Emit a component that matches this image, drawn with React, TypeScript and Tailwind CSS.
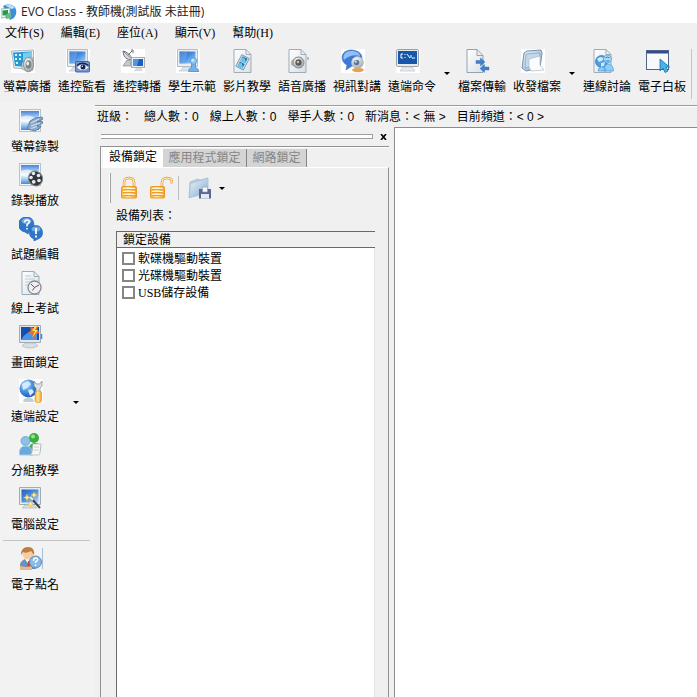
import React from "react";

type IconProps = { children: React.ReactNode };

function Icon({ children }: IconProps) {
  return (
    <svg width="24" height="24" viewBox="0 0 24 24" className="block shrink-0" aria-hidden="true">
      {children}
    </svg>
  );
}

function Gradients() {
  return (
    <svg width="0" height="0" className="absolute" aria-hidden="true">
      <defs>
        <linearGradient id="screen" x1="0" y1="0" x2="1" y2="1">
          <stop offset="0" stopColor="#1f5cc0" />
          <stop offset="0.5" stopColor="#4b92e2" />
          <stop offset="1" stopColor="#b4dafa" />
        </linearGradient>
        <linearGradient id="sky" x1="0" y1="0" x2="0" y2="1">
          <stop offset="0" stopColor="#4585d8" />
          <stop offset="0.5" stopColor="#e4f2fd" />
          <stop offset="0.7" stopColor="#b3d6f6" />
          <stop offset="1" stopColor="#3f8ade" />
        </linearGradient>
        <linearGradient id="page" x1="0" y1="0" x2="1" y2="1">
          <stop offset="0" stopColor="#ffffff" />
          <stop offset="1" stopColor="#d9e0e7" />
        </linearGradient>
        <linearGradient id="folder" x1="0" y1="0" x2="1" y2="1">
          <stop offset="0" stopColor="#e8f3fb" />
          <stop offset="1" stopColor="#86a9cf" />
        </linearGradient>
        <linearGradient id="gold" x1="0" y1="0" x2="1" y2="0">
          <stop offset="0" stopColor="#fbb02f" />
          <stop offset="0.45" stopColor="#ffe69a" />
          <stop offset="1" stopColor="#f79b1e" />
        </linearGradient>
        <radialGradient id="ball" cx="0.35" cy="0.3" r="0.8">
          <stop offset="0" stopColor="#d7edff" />
          <stop offset="0.45" stopColor="#4793e2" />
          <stop offset="1" stopColor="#1450b4" />
        </radialGradient>
        <radialGradient id="metal" cx="0.35" cy="0.3" r="0.8">
          <stop offset="0" stopColor="#ffffff" />
          <stop offset="1" stopColor="#9ba1a7" />
        </radialGradient>
      </defs>
    </svg>
  );
}

const Tile = () => <rect width="24" height="24" fill="#fff" />;

const Monitor = () => (
  <>
    <path d="M1.500 .5h20v17h-20z" fill="#eceff2" stroke="#b4bcc5" />
    <path d="M3.500 2.500h16v12h-16z" fill="url(#screen)" />
    <path d="M3.500 2.500h8l-3 12h-5z" fill="#7fb2ee" opacity=".45" />
    <path d="M7 18h9l1 2 3 2H3l3-2z" fill="#dfe3e7" stroke="#b7bec6" strokeWidth=".6" />
  </>
);

const Paper = () => (
  <path d="M3 .5h12l5 5v18H3zM15 .5v5h5" fill="url(#page)" stroke="#9fabb7" />
);

const Photo = () => (
  <>
    <rect x=".5" y=".5" width="21" height="22" fill="#f2f6fa" stroke="#b9c3cd" />
    <rect x="2" y="2" width="18" height="19" fill="url(#sky)" />
    <path d="M2 8q6-3 12 0t6-1v5q-9 3-18 1z" fill="#fff" opacity=".6" />
  </>
);

function BroadcastIcon() {
  return (
    <Icon>
      <Tile />
      <path d="M.5 2l22-1v11L19 20 3 19z" fill="#e9eef2" stroke="#a6b4c0" />
      <path d="M2 3.500l19-1v11L16 18 4 17z" fill="#2799d3" />
      <path d="M4 5h2v2H4zm4 0h2v2H8zM4 9h2v2H4zm4 0h2v2H8zm-3 4h2v2H5z" fill="#d8f3ff" />
      <path d="M12 4l9-1v8l-9 1z" fill="#7accee" />
      <path d="M11 14l8-6 3 1v12l-5 2-6-3z" fill="#d8dcd8" stroke="#8a938f" strokeWidth=".7" />
      <ellipse cx="17.500" cy="15.500" rx="5" ry="7" fill="url(#metal)" stroke="#889094" />
      <ellipse cx="17.500" cy="15.500" rx="3" ry="4.200" fill="#7b8689" />
      <ellipse cx="16.700" cy="14.600" rx="1.400" ry="2" fill="#e9eeef" />
    </Icon>
  );
}

function WatchIcon() {
  return (
    <Icon>
      <Tile />
      <Monitor />
      <rect x="9.500" y="12.500" width="14" height="10.500" rx="1" fill="#7994cb" stroke="#4462a6" />
      <path d="M11 18.500q5-6 11.500 0q-6 5-11.500 0" fill="#f5f8fc" />
      <circle cx="17" cy="18" r="2.500" fill="#12244d" />
      <circle cx="16.300" cy="17.300" r=".7" fill="#fff" />
      <path d="M11 16.500q5-4.500 11.500 0" fill="none" stroke="#16264d" strokeWidth="1.300" />
    </Icon>
  );
}

function RelayIcon() {
  return (
    <Icon>
      <Tile />
      <path d="M2 2q0 9 10 9z" fill="#d8dcdf" stroke="#71787f" />
      <path d="M2 2q6 1 10 9M7 6l4-4M10 1h2v3" fill="none" stroke="#666d74" />
      <path d="M6 11l-4 6h8l-1-6z" fill="#c4c9ce" stroke="#858c93" strokeWidth=".7" />
      <rect x="10.500" y="8.500" width="13" height="10" fill="#edf0f3" stroke="#a5afb9" />
      <rect x="12" y="10" width="10" height="7" fill="#1c5fc0" />
      <path d="M12 10h6l-2 7h-4z" fill="#5294e0" />
      <path d="M15 19h5l2 3h-9z" fill="#d5dade" />
    </Icon>
  );
}

function StudentIcon() {
  return (
    <Icon>
      <Tile />
      <Monitor />
      <path d="M12.500 22.500q0-3 3-4v-4h4v4q3 1 3.500 4z" fill="#73b2e8" stroke="#3d86c8" strokeWidth=".7" />
      <circle cx="17.500" cy="12" r="3.300" fill="#8fc6f2" stroke="#4a90cf" strokeWidth=".7" />
      <circle cx="16.700" cy="11.200" r="1.200" fill="#dcefff" />
    </Icon>
  );
}

function MovieIcon() {
  return (
    <Icon>
      <Paper />
      <g transform="rotate(28 12 13)">
        <rect x="7.500" y="7" width="8.500" height="13" fill="#d7e3ec" stroke="#70828f" strokeWidth=".7" />
        <path d="M9 8h5.500v5H9zm0 6h5.500v5H9z" fill="#1c78b8" />
        <path d="M9 10l2-1.500 3.500 3V13H9zm0 6l2-1.500 3.500 3V19H9z" fill="#6fc4ee" />
      </g>
    </Icon>
  );
}

function AudioIcon() {
  return (
    <Icon>
      <Paper />
      <path d="M5 12l5-4h6v11h-5l-6-3z" fill="#b9b7af" />
      <circle cx="12.500" cy="13.500" r="5.500" fill="url(#metal)" stroke="#868686" />
      <circle cx="12.500" cy="13.500" r="3.200" fill="#555a63" />
      <circle cx="12" cy="13" r="1.300" fill="#d7bd7d" />
      <path d="M22 8v3" stroke="#888" />
    </Icon>
  );
}

function VideoChatIcon() {
  return (
    <Icon>
      <Tile />
      <path d="M10 1c6 0 11 3 11 8s-5 8-10 8l-6 4 1-5C-2 12 0 1 10 1z" fill="#3c7ad6" stroke="#3a74c8" strokeWidth=".6" />
      <path d="M10 2c5 0 9 2 9 5-5-2-12 0-16 4C1 7 4 2 10 2z" fill="#92c0f4" />
      <ellipse cx="17" cy="21" rx="6" ry="2.200" fill="#e9a247" />
      <circle cx="16.500" cy="13.500" r="6" fill="url(#metal)" stroke="#b5bcc6" strokeWidth=".6" />
      <circle cx="15.500" cy="13.500" r="2.800" fill="#5b7698" />
      <circle cx="14.700" cy="12.600" r="1.200" fill="#c9e3fb" />
    </Icon>
  );
}

function CommandIcon() {
  return (
    <Icon>
      <Tile />
      <rect x=".5" y=".5" width="22" height="17" rx="1" fill="#e8ebee" stroke="#97a1ab" />
      <rect x="2" y="2" width="19" height="13" fill="#1557a8" />
      <path d="M7 5H5v4h2M9 5v1M9 8v1M11 5l3 4M15 6v3M16 9h3" fill="none" stroke="#fff" />
      <path d="M7 18h9l3 4H4z" fill="#e9ecef" stroke="#bbc2c9" strokeWidth=".7" />
    </Icon>
  );
}

function TransferIcon() {
  return (
    <Icon>
      <path d="M1 .5h10l6 6v17H1zM11 .5v6h6" fill="url(#page)" stroke="#94a3b0" />
      <path d="M10 11.500h4.500V9l4.500 4-4.500 4v-2.500H10zM23 18h-4.500v-2.500l-4.500 4 4.500 4V21H23z" fill="#3f7fce" stroke="#2d68b4" strokeWidth=".4" />
    </Icon>
  );
}

function CollectIcon() {
  return (
    <Icon>
      <Tile />
      <path d="M3 4l3-2 14-1 1 3-2 15-14 3-4-3z" fill="url(#folder)" stroke="#7892ad" />
      <path d="M5 5l14-1-2 13-13 2z" fill="#c3d8ea" stroke="#7f9bb8" strokeWidth=".6" />
      <path d="M8 10l11-3v9l4 5-12 1q-4-1-3-12z" fill="#fafcfd" stroke="#a4afbb" strokeWidth=".6" />
    </Icon>
  );
}

function DiscussIcon() {
  return (
    <Icon>
      <Paper />
      <circle cx="10.500" cy="12.500" r="6" fill="#4e9bdd" stroke="#2b72b8" strokeWidth=".7" />
      <path d="M6 10l3-2 4 1-2 3-3 1zm4 4l4-1-1 4-3 1z" fill="#c5ecff" />
      <circle cx="16.500" cy="10" r="4" fill="#a8dcfa" stroke="#4c9bd4" strokeWidth=".7" />
      <path d="M14.500 9q2-2 4 0M14.500 12h4" stroke="#2f82c3" fill="none" />
      <path d="M7 22q0-4 4-4t4 4zM13 22q0-7 4.500-7t5 7z" fill="#8fcdf3" stroke="#4b9ed8" strokeWidth=".7" />
    </Icon>
  );
}

function WhiteboardIcon() {
  return (
    <Icon>
      <rect x=".5" y="1.500" width="22" height="19" fill="#f7f9fc" stroke="#52648d" />
      <path d="M1 2h21v2.500H1z" fill="#304c8e" />
      <path d="M14 10v12l3-3 2 4.500 3-1.500-2-4h3.500z" fill="#45b4e7" stroke="#1e6f9f" strokeWidth=".8" />
    </Icon>
  );
}

function RecordIcon() {
  return (
    <Icon>
      <Photo />
      <path d="M8 20l3-8 5-3 7-1 1 2-6 3 5-1 1 2-6 3 4 0-1 2-5 3z" fill="#8ba9cb" stroke="#4f7199" strokeWidth=".8" />
      <path d="M12 14l8-4M12 17l9-3M12 19.500l6-2" stroke="#e0ecf8" strokeWidth=".9" />
    </Icon>
  );
}

function PlaybackIcon() {
  return (
    <Icon>
      <Photo />
      <ellipse cx="16.500" cy="15.500" rx="7" ry="7.500" transform="rotate(-30 16.500 15.500)" fill="#33373b" stroke="#858a8e" />
      <g fill="#e6eaec">
        <circle cx="14.500" cy="10.500" r="1.800" />
        <circle cx="12" cy="14.500" r="1.800" />
        <circle cx="19.500" cy="12.500" r="1.800" />
        <circle cx="14.700" cy="18.800" r="1.900" />
        <circle cx="20" cy="17.500" r="1.800" />
      </g>
    </Icon>
  );
}

function QuizIcon() {
  return (
    <Icon>
      <path d="M8 0a7.500 7.500 0 0 1 2 14.500L9 17l-3-2A7.500 7.500 0 0 1 8 0z" fill="#2f76cb" stroke="#2763b3" strokeWidth=".7" />
      <ellipse cx="7.500" cy="4" rx="5" ry="3" fill="#8fc1ef" opacity=".7" />
      <path d="M5.500 5.500q.5-3 3-2.500c3 .5 2 3.500-.5 4.500v2M8 11v1.500" fill="none" stroke="#fff" strokeWidth="1.500" />
      <path d="M17 8.500a7 7 0 0 1 2 13.500l-4 2v-2A7 7 0 0 1 17 8.500z" fill="#2f76cb" stroke="#2763b3" strokeWidth=".7" />
      <ellipse cx="17" cy="12" rx="4.500" ry="2.500" fill="#8fc1ef" opacity=".7" />
      <path d="M17 11v6M17 18.500v2" stroke="#fff" strokeWidth="1.800" />
    </Icon>
  );
}

function ExamIcon() {
  return (
    <Icon>
      <Paper />
      <path d="M6 5h6M6 8h10M6 11h6M6 14h4" stroke="#c3cbd2" />
      <circle cx="15.500" cy="16.500" r="6.500" fill="#edf0f2" stroke="#858c94" strokeWidth="1.300" />
      <path d="M12 13l3.500 3.500L20 14M15.500 16.500l-2 3" fill="none" stroke="#7c4b48" />
    </Icon>
  );
}

function LockScreenIcon() {
  return (
    <Icon>
      <path d="M.5 .5h21v17H.5z" fill="#e3e7eb" stroke="#a3abb3" />
      <path d="M2 2h18v13H2z" fill="#124fae" />
      <path d="M2 15q4-9 16-9v9z" fill="#4a93e4" />
      <path d="M6 18h10l3 3q-8 4-16 0z" fill="#d9dee2" stroke="#adb4bb" strokeWidth=".7" />
      <path d="M11 2l4 1 4-2-1 4 3 3-4 1-2 5-2-5-4-1 3-3z" fill="#f06b24" />
      <path d="M16 1l-3 5h3l-3 7 6-8h-3l2-4z" fill="#ffdb57" />
      <path d="M22.500 9v5" stroke="#3c8ee0" strokeWidth="1.500" />
    </Icon>
  );
}

function RemoteSetupIcon() {
  return (
    <Icon>
      <Tile />
      <circle cx="9.500" cy="9.500" r="9" fill="url(#ball)" />
      <path d="M3 5l6-3 3 3-4 4-4 2zM9 11l4-1 2 3-4 4z" fill="#d3ecfc" />
      <path d="M5 20q5-3 9 0l1 3H4z" fill="#c5ced6" />
      <path d="M15 2v5l2 2v4h4V9l2-2V2l-2.500 3h-3z" fill="#dde1e5" stroke="#87919a" strokeWidth=".8" />
      <rect x="16" y="12" width="6.500" height="11.500" rx="2" fill="url(#gold)" stroke="#d09224" strokeWidth=".6" />
    </Icon>
  );
}

function GroupIcon() {
  return (
    <Icon>
      <path d="M9 19q0-9 7-9t6 7z" fill="#4cae50" />
      <circle cx="15" cy="5" r="5" fill="#36af3d" />
      <circle cx="14" cy="3.500" r="2" fill="#9be08d" />
      <circle cx="6.500" cy="8" r="4.500" fill="#8dc1e6" stroke="#5596c5" strokeWidth=".7" />
      <path d="M.5 22q-1-9 6-9t7 9z" fill="#69aada" stroke="#9bcbed" />
      <path d="M14 11h8l-1 9q0 2-2 2h-8q2-1 2-3z" fill="#f7f9f8" stroke="#adb8b5" strokeWidth=".8" />
      <path d="M15 14h5M14.500 17h5" stroke="#c5cecb" />
    </Icon>
  );
}

function ComputerSetupIcon() {
  return (
    <Icon>
      <path d="M.5 .5h21v17H.5z" fill="#e8ebee" stroke="#a3abb3" />
      <path d="M2.500 2.500h17v13h-17z" fill="url(#screen)" />
      <path d="M6 18h9l3 3H3z" fill="#d9dee2" stroke="#afb7be" strokeWidth=".7" />
      <path d="M12 11l9 10" stroke="#3b424b" strokeWidth="2" />
      <path d="M11 10l3 3" stroke="#f3f3f3" strokeWidth="2" />
      <path d="M8 7l1 2.500 2.500 1-2.500 1L8 14l-1-2.500-2.500-1 2.500-1zM15 5l1 2 2 1-2 1-1 2-1-2-2-1 2-1zM11.500 14l1 2 2 1-2 1-1 2-1-2-2-1 2-1z" fill="#fff08a" stroke="#e9b034" strokeWidth=".5" />
    </Icon>
  );
}

function RollCallIcon() {
  return (
    <Icon>
      <path d="M1 22q-1-8 5-10h7q4 2 4 10z" fill="#6a92bd" />
      <path d="M6 12l4 6 3-6z" fill="#fff" />
      <path d="M9 14h2l1 7H8z" fill="#b74e3d" />
      <circle cx="9" cy="7" r="5.500" fill="#f6cda2" />
      <path d="M2 8Q2 0 9 0q7 0 6 8l-3-4q-5 3-8 1z" fill="#c07b3e" />
      <path d="M1 19l6 1 6-1v4H1z" fill="#e6b887" />
      <circle cx="16.500" cy="15" r="6" fill="#8cb9e4" stroke="#5d8abb" />
      <path d="M14.500 14q0-3 2-3 2.500 0 2 2-.5 1-2 2v1M16.500 17.500V19" fill="none" stroke="#fff" strokeWidth="1.400" />
      <path d="M23.500 1v21" stroke="#a9bdd3" />
    </Icon>
  );
}

function LockIcon() {
  return (
    <Icon>
      <path d="M7 11V6.500Q7 2 12 2t5 4.500V11" fill="none" stroke="#dd9a3c" strokeWidth="2.600" />
      <path d="M7 11V6.500Q7 2 12 2t5 4.500V11" fill="none" stroke="#ffefcc" strokeWidth="1.200" />
      <rect x="4.500" y="10.500" width="15" height="11.500" rx="1" fill="url(#gold)" stroke="#ee9a2a" />
      <path d="M6 13.500h12M6 16.500h12M6 19.500h12" stroke="#f09c2c" />
      <path d="M6 12.500h12M6 15.500h12M6 18.500h12" stroke="#fff3cf" />
    </Icon>
  );
}

function UnlockIcon() {
  return (
    <Icon>
      <path d="M13 11V6.500Q13 2 18 2t5 4.500V8" fill="none" stroke="#e39a36" strokeWidth="2.600" />
      <path d="M13 11V6.500Q13 2 18 2t5 4.500V8" fill="none" stroke="#ffefcc" strokeWidth="1.200" />
      <rect x="1.500" y="10.500" width="14" height="11.500" rx="1" fill="url(#gold)" stroke="#ee9a2a" />
      <path d="M3 13.500h11M3 16.500h11M3 19.500h11" stroke="#f09c2c" />
      <path d="M3 12.500h11M3 15.500h11M3 18.500h11" stroke="#fff3cf" />
    </Icon>
  );
}

function SaveFolderIcon() {
  return (
    <Icon>
      <path d="M2 6l8-3 2 1 8-2v15L4 21l-3 1z" fill="#b4cbe0" stroke="#9db8d2" strokeWidth=".7" />
      <path d="M3 8l17-5-1 13L2 21z" fill="url(#folder)" />
      <path d="M11 13h12v9.500H11z" fill="#5d6892" />
      <path d="M14.500 11h5v5h-5z" fill="#f4f6fa" stroke="#8a93b2" strokeWidth=".6" />
      <path d="M13 18h8v4.500h-8z" fill="#e4e8f0" />
    </Icon>
  );
}

function AppIcon() {
  return (
    <svg width="16" height="16" viewBox="0 0 16 16" className="block shrink-0" aria-hidden="true">
      <path d="M2 2q6-4 12 1 3 6-1 11l-4 2z" fill="#3d8fdc" />
      <path d="M4 1q6-2 10 3l-4 1z" fill="#b9e1fa" />
      <path d="M0 5l9-1v9l-9 1z" fill="#e8f4ec" stroke="#84a49a" strokeWidth=".7" />
      <path d="M1.500 6.500L7 6v5l-5.500.500z" fill="#24994a" />
      <path d="M4 11l6-3v6l-5 1z" fill="#69b98a" />
    </svg>
  );
}

function DropArrow({ label }: { label: string }) {
  return (
    <button type="button" aria-label={label} className="flex h-4 w-2 items-center justify-center">
      <svg width="6" height="3" viewBox="0 0 6 3" className="block" aria-hidden="true">
        <path d="M0 0h6L3 3z" fill="#000" />
      </svg>
    </button>
  );
}

function ToolButton({ label, icon }: { label: string; icon: React.ReactNode }) {
  return (
    <button type="button" className="flex w-12 shrink-0 flex-col items-start gap-[6px] whitespace-nowrap leading-4">
      <span className="pl-2">{icon}</span>
      <span>{label}</span>
    </button>
  );
}

const menus = ["文件(S)", "編輯(E)", "座位(A)", "顯示(V)", "幫助(H)"];

const toolGroups = [
  {
    more: "更多遠端命令",
    tools: [
      { label: "螢幕廣播", icon: <BroadcastIcon /> },
      { label: "遙控監看", icon: <WatchIcon /> },
      { label: "遙控轉播", icon: <RelayIcon /> },
      { label: "學生示範", icon: <StudentIcon /> },
      { label: "影片教學", icon: <MovieIcon /> },
      { label: "語音廣播", icon: <AudioIcon /> },
      { label: "視訊對講", icon: <VideoChatIcon /> },
      { label: "遠端命令", icon: <CommandIcon /> },
    ],
  },
  {
    more: "更多收發檔案",
    tools: [
      { label: "檔案傳輸", icon: <TransferIcon /> },
      { label: "收發檔案", icon: <CollectIcon /> },
    ],
  },
  {
    more: "",
    tools: [
      { label: "連線討論", icon: <DiscussIcon /> },
      { label: "電子白板", icon: <WhiteboardIcon /> },
    ],
  },
];

const sideTools = [
  { label: "螢幕錄製", icon: <RecordIcon /> },
  { label: "錄製播放", icon: <PlaybackIcon /> },
  { label: "試題編輯", icon: <QuizIcon /> },
  { label: "線上考試", icon: <ExamIcon /> },
  { label: "畫面鎖定", icon: <LockScreenIcon /> },
  { label: "遠端設定", icon: <RemoteSetupIcon />, more: true },
  { label: "分組教學", icon: <GroupIcon /> },
  { label: "電腦設定", icon: <ComputerSetupIcon /> },
];

const devices = ["軟碟機驅動裝置", "光碟機驅動裝置", "USB儲存設備"];

function StatusBar() {
  return (
    <div className="flex h-[22px] shrink-0 items-center gap-[11px] whitespace-pre border-t border-[#9c9c9c] pl-[2px] font-['Liberation_Sans','Noto_Sans_CJK_TC',sans-serif] shadow-[inset_0_1px_0_#fff]">
      <span>班級：</span>
      <span>總人數：0</span>
      <span>線上人數：0</span>
      <span>舉手人數：0</span>
      <span>新消息：&lt; 無 &gt;</span>
      <span>目前頻道：&lt; 0 &gt;</span>
    </div>
  );
}

function LockPanel() {
  return (
    <section className="flex w-[289px] shrink-0 flex-col">
      <div className="flex h-[19px] items-center gap-1 pl-px">
        <div className="h-[5px] flex-1 border border-l-0 border-[#9f9f9f] bg-white" />
        <button type="button" aria-label="關閉" className="flex h-4 w-3 items-center justify-center">
          <svg width="7" height="6" viewBox="0 0 7 6" aria-hidden="true">
            <path d="M1 0l5 6M6 0L1 6" stroke="#000" strokeWidth="1.600" />
          </svg>
        </button>
      </div>
      <div className="flex min-h-0 flex-1 flex-col border-l border-t border-[#919191]">
        <div role="tablist" className="flex h-5 shrink-0 pl-[2px] shadow-[inset_1px_1px_0_#fff]">
          <button role="tab" aria-selected="true" type="button" className="w-[60px] whitespace-nowrap bg-white">
            設備鎖定
          </button>
          <button
            role="tab"
            aria-selected="false"
            type="button"
            className="mt-[2px] w-[84px] whitespace-nowrap border-r border-[#858585] bg-[#d4d4d4] text-[#858585]"
          >
            應用程式鎖定
          </button>
          <button
            role="tab"
            aria-selected="false"
            type="button"
            className="mt-[2px] w-[60px] whitespace-nowrap border-r border-[#858585] bg-[#d4d4d4] text-[#858585]"
          >
            網路鎖定
          </button>
        </div>
        <div className="flex min-h-0 flex-1 flex-col border-r border-t border-r-[#919191] border-t-white pl-2 pr-[13px] pt-1">
          <div className="flex h-8 shrink-0 items-center">
            <div className="mr-[6px] h-[30px] w-[2px] border-r border-[#a0a0a0] bg-white" />
            <button type="button" aria-label="鎖定">
              <LockIcon />
            </button>
            <button type="button" aria-label="解除鎖定" className="ml-2">
              <UnlockIcon />
            </button>
            <div className="ml-[5px] h-6 w-px bg-[#bdbdbd]" />
            <button type="button" aria-label="儲存設定" className="ml-[9px]">
              <SaveFolderIcon />
            </button>
            <span className="ml-[6px]">
              <DropArrow label="更多儲存選項" />
            </span>
          </div>
          <div className="flex min-h-0 flex-1 flex-col pl-[7px] pt-1">
            <h2 className="leading-4">設備列表：</h2>
            <div className="mt-[7px] min-h-0 flex-1 overflow-hidden border-l border-t border-[#696969] bg-white shadow-[inset_-1px_0_0_#e3e3e3]">
              <div className="h-4 border-b border-[#696969] bg-[#f0f0f0] pl-[6px] leading-4">鎖定設備</div>
              <ul className="pl-[5px] pt-[2px]">
                {devices.map((device) => (
                  <li key={device}>
                    <label className="flex h-[17px] items-center gap-[3px] leading-4">
                      <input
                        type="checkbox"
                        className="h-[13px] w-[13px] appearance-none border-2 border-[#858585] bg-white checked:bg-[#333]"
                      />
                      {device}
                    </label>
                  </li>
                ))}
              </ul>
            </div>
          </div>
        </div>
      </div>
    </section>
  );
}

export default function App() {
  return (
    <div
      lang="zh-Hant"
      className="flex h-screen flex-col overflow-hidden bg-[#f0f0f0] font-['Liberation_Serif','Noto_Sans_CJK_TC',serif] text-[12px] leading-4 text-black"
    >
      <Gradients />
      <header className="flex h-[23px] shrink-0 items-center gap-1 bg-white pl-px font-['Open_Sans','Noto_Sans_CJK_TC',sans-serif]">
        <AppIcon />
        <h1 className="whitespace-nowrap text-[#222]">EVO Class - 教師機(測試版 未註冊)</h1>
      </header>
      <nav className="flex h-[19px] shrink-0 items-center gap-[17px] pl-[5px]">
        {menus.map((menu) => (
          <button key={menu} type="button" className="whitespace-nowrap">
            {menu}
          </button>
        ))}
      </nav>
      <div className="flex h-[60px] shrink-0 items-start pl-[3px] pt-[7px]">
        {toolGroups.map((group) => (
          <div key={group.tools[0].label} className="flex shrink-0 gap-[7px]">
            {group.tools.map((tool) => (
              <ToolButton key={tool.label} {...tool} />
            ))}
            {group.more && (
              <div className="mr-[7px] pt-4">
                <DropArrow label={group.more} />
              </div>
            )}
          </div>
        ))}
        <div className="ml-[5px] h-[50px] w-px shrink-0 bg-[#c4c4c4]" />
      </div>
      <div className="flex min-h-0 flex-1">
        <aside className="flex w-[95px] shrink-0 flex-col bg-[#f2f2f2] pl-[3px] pt-[7px]">
          <div className="flex flex-col gap-2 pl-2">
            {sideTools.map((tool) => (
              <div key={tool.label} className="flex items-center gap-[13px]">
                <ToolButton label={tool.label} icon={tool.icon} />
                {tool.more && <DropArrow label="更多遠端設定" />}
              </div>
            ))}
          </div>
          <hr className="mr-[5px] mt-[7px] border-[#c4c4c4]" />
          <div className="pl-2 pt-[6px]">
            <ToolButton label="電子點名" icon={<RollCallIcon />} />
          </div>
        </aside>
        <div className="flex min-w-0 flex-1 flex-col pt-[3px]">
          <StatusBar />
          <div className="flex min-h-0 flex-1 pl-[5px]">
            <LockPanel />
            <main className="ml-[5px] min-w-0 flex-1 border-l border-t border-[#8c8c8c] bg-white" />
          </div>
        </div>
      </div>
    </div>
  );
}
